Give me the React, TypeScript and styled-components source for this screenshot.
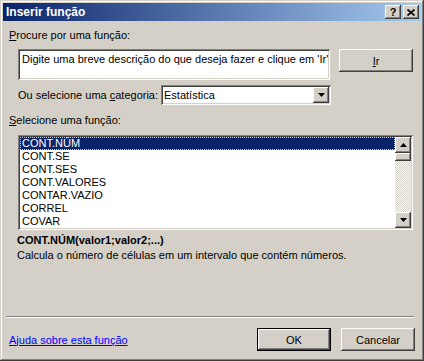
import styled, { createGlobalStyle } from 'styled-components'

const GlobalStyle = createGlobalStyle`
  html, body {
    margin: 0;
    padding: 0;
    background: #d4d0c8;
  }
  * {
    box-sizing: border-box;
  }
`

const raised = `
  box-shadow: inset -1px -1px #404040, inset 1px 1px #ffffff,
    inset -2px -2px #808080, inset 2px 2px #d4d0c8;
`
const sunken = `
  box-shadow: inset 1px 1px #808080, inset -1px -1px #ffffff,
    inset 2px 2px #404040, inset -2px -2px #d4d0c8;
`

const Window = styled.div`
  width: 424px;
  height: 361px;
  background: #d4d0c8;
  padding: 3px;
  display: flex;
  flex-direction: column;
  font-family: "Liberation Sans", Arial, sans-serif;
  font-size: 11px;
  color: #000;
  box-shadow: inset -1px -1px #404040, inset 1px 1px #d4d0c8,
    inset -2px -2px #808080, inset 2px 2px #ffffff;
`

const TitleBar = styled.div`
  height: 18px;
  display: flex;
  align-items: center;
  padding: 0 2px 0 2px;
  background: linear-gradient(to right, #0a246a, #a6caf0);
`

const Title = styled.div`
  flex: 1;
  color: #fff;
  font-weight: bold;
  font-size: 12px;
  padding-left: 1px;
`

const CaptionButton = styled.div`
  width: 16px;
  height: 14px;
  margin-left: 2px;
  background: #d4d0c8;
  ${raised}
  display: flex;
  align-items: center;
  justify-content: center;
  font-weight: bold;
  font-size: 11px;
  line-height: 14px;
`

const Body = styled.div`
  flex: 1;
  display: flex;
  flex-direction: column;
  padding: 7px 6px 7px 6px;
`

const Label = styled.div<{ $indent?: number }>`
  line-height: 14px;
  height: 14px;
  padding-left: ${(p) => p.$indent ?? 0}px;
  white-space: nowrap;
`

const Row = styled.div<{ $top: number }>`
  display: flex;
  align-items: flex-start;
  margin-top: ${(p) => p.$top}px;
  padding-left: 9px;
`

const TextArea = styled.div`
  width: 312px;
  height: 31px;
  background: #fff;
  ${sunken}
  padding: 3px 4px;
  line-height: 14px;
  white-space: nowrap;
`

const Button = styled.div<{ $default?: boolean }>`
  width: 74px;
  height: 23px;
  display: flex;
  align-items: center;
  justify-content: center;
  background: #d4d0c8;
  ${(p) =>
    p.$default
      ? `box-shadow: inset 0 0 0 1px #000, inset -2px -2px #404040, inset 2px 2px #ffffff,
    inset -3px -3px #808080;`
      : raised}
`

const Mn = styled.span`
  text-decoration: underline;
`

const CategoryRow = styled.div`
  display: flex;
  align-items: center;
  margin-top: 5px;
  padding-left: 9px;
  height: 20px;
`

const Select = styled.div`
  width: 170px;
  height: 20px;
  margin-left: 3px;
  background: #fff;
  ${sunken}
  display: flex;
  align-items: center;
  padding: 2px;
`

const SelectText = styled.div`
  flex: 1;
  padding-left: 1px;
`

const ArrowButton = styled.div<{ $h?: number }>`
  width: 16px;
  height: ${(p) => p.$h ?? 16}px;
  background: #d4d0c8;
  ${raised}
  display: flex;
  align-items: center;
  justify-content: center;
`

const ListBox = styled.div`
  margin: 8px 0 0 9px;
  width: 395px;
  height: 95px;
  background: #fff;
  ${sunken}
  padding: 2px;
  display: flex;
`

const Items = styled.div`
  flex: 1;
`

const Item = styled.div<{ $selected?: boolean }>`
  height: 13px;
  line-height: 13px;
  padding-left: 2px;
  background: ${(p) => (p.$selected ? '#0a246a' : 'transparent')};
  color: ${(p) => (p.$selected ? '#fff' : '#000')};
  outline: ${(p) => (p.$selected ? '1px dotted #d4d0c8' : 'none')};
  outline-offset: -1px;
`

const ScrollBar = styled.div`
  width: 16px;
  display: flex;
  flex-direction: column;
  background: repeating-conic-gradient(#ffffff 0 25%, #d4d0c8 0 50%) 0 0 / 2px 2px;
`

const Thumb = styled.div`
  height: 8px;
  background: #d4d0c8;
  ${raised}
`

const Track = styled.div`
  flex: 1;
`

const Signature = styled.div`
  margin: 3px 0 0 8px;
  font-weight: bold;
  line-height: 14px;
`

const Description = styled.div`
  margin: 1px 0 0 8px;
  line-height: 14px;
`

const Spacer = styled.div`
  flex: 1;
`

const Separator = styled.div`
  height: 2px;
  border-top: 1px solid #808080;
  border-bottom: 1px solid #ffffff;
  margin: 0 1px 0 -3px;
`

const Footer = styled.div`
  display: flex;
  align-items: center;
  margin-top: 10px;
  gap: 10px;
`

const HelpLink = styled.a`
  flex: 1;
  color: #0000ff;
  text-decoration: underline;
  cursor: pointer;
`

const Arrow = ({ up }: { up?: boolean }) => (
  <svg width="7" height="4" viewBox="0 0 7 4">
    <path d={up ? 'M3.5 0 L7 4 L0 4 Z' : 'M0 0 L7 0 L3.5 4 Z'} fill="#000" />
  </svg>
)

const functions = [
  'CONT.NÚM',
  'CONT.SE',
  'CONT.SES',
  'CONT.VALORES',
  'CONTAR.VAZIO',
  'CORREL',
  'COVAR',
]

export default function App() {
  return (
    <>
      <GlobalStyle />
      <Window>
        <TitleBar>
          <Title>Inserir função</Title>
          <CaptionButton>?</CaptionButton>
          <CaptionButton>
            <svg width="8" height="7" viewBox="0 0 8 7">
              <path d="M0.5 0.5 L7.5 6.5 M7.5 0.5 L0.5 6.5" stroke="#000" strokeWidth="1.6" />
            </svg>
          </CaptionButton>
        </TitleBar>
        <Body>
          <Label>
            <Mn>P</Mn>rocure por uma função:
          </Label>
          <Row $top={7}>
            <TextArea>Digite uma breve descrição do que deseja fazer e clique em 'Ir'</TextArea>
            <Button style={{ marginLeft: 9 }}>
              <Mn>I</Mn>r
            </Button>
          </Row>
          <CategoryRow>
            <Label>
              Ou selecione uma <Mn>c</Mn>ategoria:
            </Label>
            <Select>
              <SelectText>Estatística</SelectText>
              <ArrowButton>
                <Arrow />
              </ArrowButton>
            </Select>
          </CategoryRow>
          <Label style={{ marginTop: 8 }}>
            <Mn>S</Mn>elecione uma função:
          </Label>
          <ListBox>
            <Items>
              {functions.map((f, i) => (
                <Item key={f} $selected={i === 0}>
                  {f}
                </Item>
              ))}
            </Items>
            <ScrollBar>
              <ArrowButton>
                <Arrow up />
              </ArrowButton>
              <Thumb />
              <Track />
              <ArrowButton>
                <Arrow />
              </ArrowButton>
            </ScrollBar>
          </ListBox>
          <Signature>CONT.NÚM(valor1;valor2;...)</Signature>
          <Description>Calcula o número de células em um intervalo que contém números.</Description>
          <Spacer />
          <Separator />
          <Footer>
            <HelpLink>Ajuda sobre esta função</HelpLink>
            <Button $default>OK</Button>
            <Button>Cancelar</Button>
          </Footer>
        </Body>
      </Window>
    </>
  )
}
